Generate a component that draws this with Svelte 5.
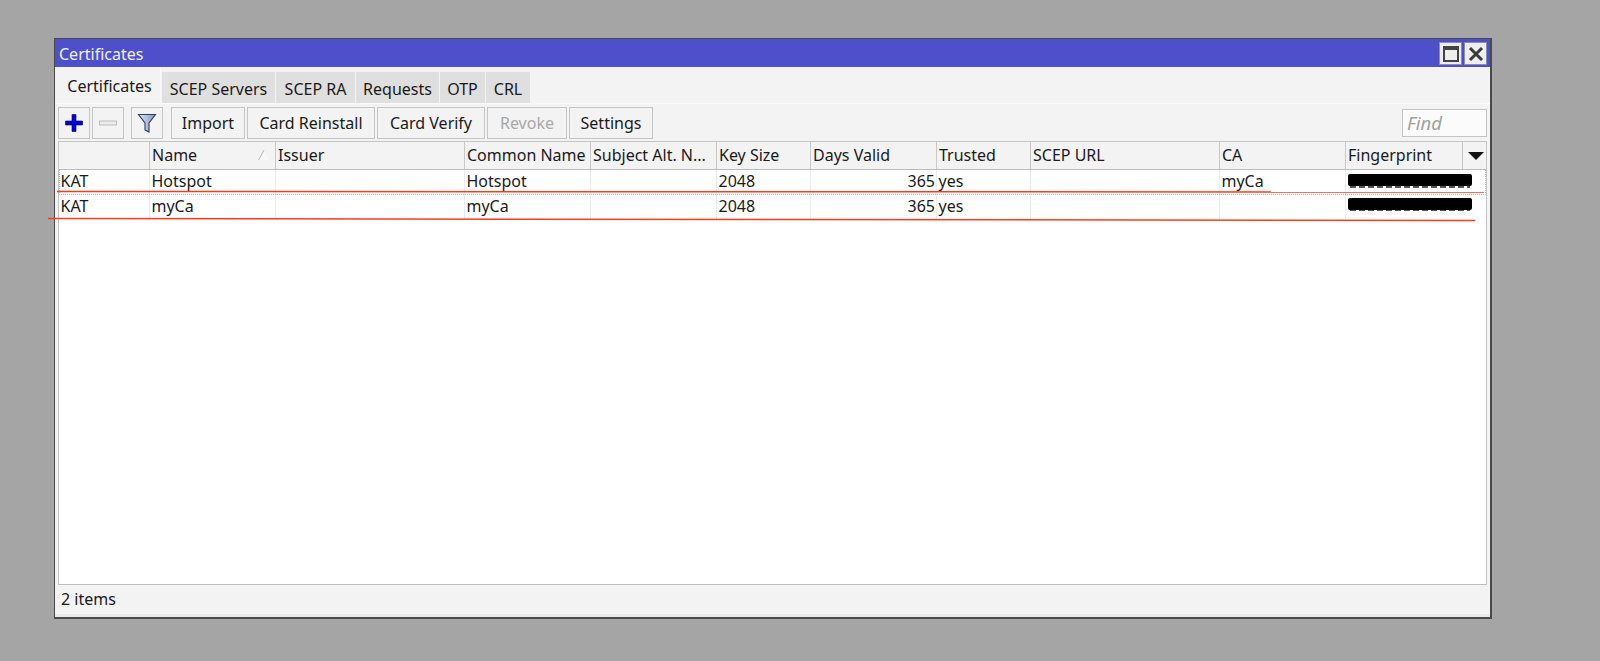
<script lang="ts">
  const tabs = [
    { label: "Certificates", w: 102, active: true },
    { label: "SCEP Servers", w: 113 },
    { label: "SCEP RA", w: 79 },
    { label: "Requests", w: 83 },
    { label: "OTP", w: 45 },
    { label: "CRL", w: 44 },
  ];
  const actions = [
    { label: "Import", w: 74 },
    { label: "Card Reinstall", w: 128 },
    { label: "Card Verify", w: 108 },
    { label: "Revoke", w: 80, off: true },
    { label: "Settings", w: 84 },
  ];
  const cols = [
    { label: "", w: 91 },
    { label: "Name", w: 126, sorted: true },
    { label: "Issuer", w: 189 },
    { label: "Common Name", w: 126 },
    { label: "Subject Alt. N...", w: 126 },
    { label: "Key Size", w: 94 },
    { label: "Days Valid", w: 126, right: true },
    { label: "Trusted", w: 94 },
    { label: "SCEP URL", w: 189 },
    { label: "CA", w: 126 },
    { label: "Fingerprint", w: 117 },
  ];
  const rows = [
    ["KAT", "Hotspot", "", "Hotspot", "", "2048", "365", "yes", "", "myCa", "#"],
    ["KAT", "myCa", "", "myCa", "", "2048", "365", "yes", "", "", "#"],
  ];
  const base = cols.slice(0, -1).map((c) => c.w + "px").join(" ");
  const headCols = base + " 117px 24px";
  // data cells of the last column run wider than its header
  const rowCols = base + " 126px 15px";
</script>

<div class="window">
  <div class="title">
    <span>Certificates</span>
    <div class="winbtns">
      <button class="winbtn" aria-label="Maximize">
        <svg viewBox="0 0 22 22" width="22" height="22"><rect x="4" y="4" width="14" height="14" fill="none" stroke="#444" stroke-width="2" /><rect x="4" y="4" width="14" height="3" fill="#444" /></svg>
      </button>
      <button class="winbtn" aria-label="Close">
        <svg viewBox="0 0 22 22" width="22" height="22"><path d="M5 5 L17 17 M17 5 L5 17" stroke="#3a3a3a" stroke-width="3" /></svg>
      </button>
    </div>
  </div>

  <div class="tabs">
    {#each tabs as t}
      <div class="tab" class:active={t.active} style="width:{t.w}px">{t.label}</div>
    {/each}
  </div>

  <div class="toolbar">
    <button class="tool" aria-label="Add">
      <svg viewBox="0 0 20 20" width="20" height="20"><path d="M8 1.500h4v6.500h6.500v4H12v6.500H8V12H1.500V8H8z" fill="#0000d8" stroke="#000060" stroke-width="0.6" /></svg>
    </button>
    <button class="tool" aria-label="Remove">
      <svg viewBox="0 0 20 20" width="20" height="20"><rect x="1.500" y="8" width="17" height="4" fill="#ececec" stroke="#bdbdbd" /></svg>
    </button>
    <button class="tool filter" aria-label="Filter">
      <svg viewBox="0 0 20 22" width="20" height="22">
        <defs>
          <linearGradient id="fun" x1="0" x2="1" y1="0" y2="0">
            <stop offset="0" stop-color="#e4e9f4" />
            <stop offset="1" stop-color="#7f93c4" />
          </linearGradient>
        </defs>
        <path d="M1.500 2.500h17L12 11v9l-4-2v-7z" fill="url(#fun)" stroke="#2f3b60" stroke-width="1.100" />
      </svg>
    </button>
    <div class="actions">
      {#each actions as a}
        <button class="act" class:off={a.off} style="width:{a.w}px">{a.label}</button>
      {/each}
    </div>
    <div class="find">Find</div>
  </div>

  <div class="table">
    <div class="head" style="grid-template-columns:{headCols}">
      {#each cols as c}
        <div class="th">
          {c.label}
          {#if c.sorted}
            <svg class="sort" viewBox="0 0 12 12" width="12" height="12"><path d="M6 1 L11.500 11 H0.500 Z" fill="#f8f8f8" /><path d="M6 1 L0.500 11" fill="none" stroke="#b4b4b4" /></svg>
          {/if}
        </div>
      {/each}
      <div class="th more"><span class="caret"></span></div>
    </div>
    <div class="body">
      {#each rows as r, ri}
        <div class="row" class:first={ri === 0} style="grid-template-columns:{rowCols}">
          {#each r as v, i}
            <div class="td" class:num={cols[i].right}>
              {#if v === "#"}<span class="blot" class:low={ri === 1}></span>{:else}{v}{/if}
            </div>
          {/each}
        </div>
      {/each}
    </div>
  </div>

  <div class="status">2 items</div>
</div>

<svg class="ink" width="1600" height="661" aria-hidden="true">
  <line x1="57" y1="191.500" x2="1484" y2="192" stroke="#ff3b1c" stroke-width="1.500" />
  <line x1="48" y1="218.500" x2="1475" y2="220.500" stroke="#ff3b1c" stroke-width="1.500" />
</svg>

<style>
  :global(body) {
    margin: 0;
    background: #a5a5a5;
  }

  .window {
    box-sizing: border-box;
    width: 1438px;
    height: 581px;
    margin: 38px 0 0 54px;
    display: flex;
    flex-direction: column;
    background: #f3f3f3;
    border: 1px solid #4a4a4a;
    border-width: 1px 2px 2px 1px;
    font-family: "Noto Sans", "Open Sans", sans-serif;
    font-size: 16px;
    color: #1a1a1a;
  }

  button {
    font: inherit;
    color: inherit;
    padding: 0;
  }

  .title {
    height: 28px;
    flex: none;
    display: flex;
    align-items: center;
    justify-content: space-between;
    padding: 0 3px 0 4px;
    background: #4e4fcb;
    color: #eef0ff;
  }

  .title span {
    padding-top: 2px;
  }

  .winbtns {
    display: flex;
    gap: 2px;
  }

  .winbtn {
    width: 23px;
    height: 23px;
    display: grid;
    place-items: center;
    background: #eeeeee;
    border: 1px solid #8d8db0;
  }

  .tabs {
    height: 37px;
    flex: none;
    display: flex;
    align-items: flex-end;
    gap: 1px;
    padding-left: 4px;
    border-bottom: 1px solid #fafafa;
    box-sizing: border-box;
  }

  .tab {
    height: 31px;
    box-sizing: border-box;
    padding-top: 2px;
    display: flex;
    align-items: center;
    justify-content: center;
    background: #dfdfdf;
    white-space: nowrap;
  }

  .tab.active {
    height: 36px;
    background: #f3f3f3;
    border: solid #fafafa;
    border-width: 1px 1px 0 0;
    padding-top: 0;
  }

  .toolbar {
    height: 35px;
    flex: none;
    box-sizing: border-box;
    display: flex;
    align-items: flex-end;
    padding: 0 3px;
  }

  .tool {
    box-sizing: border-box;
    width: 32px;
    height: 32px;
    margin-right: 2px;
    display: grid;
    place-items: center;
    background: #f3f3f3;
    border: 1px solid #c4c4c4;
  }

  .tool.filter {
    margin-left: 5px;
  }

  .actions {
    display: flex;
    gap: 2px;
    margin-left: 6px;
  }

  .act {
    box-sizing: border-box;
    height: 32px;
    background: #f3f3f3;
    border: 1px solid #c4c4c4;
    white-space: nowrap;
  }

  .act.off {
    color: #a8a8a8;
  }

  .find {
    box-sizing: border-box;
    width: 85px;
    height: 28px;
    margin: 0 0 2px auto;
    padding: 0 4px;
    line-height: 25px;
    background: #fbfbfb;
    border: 1px solid #c4c4c4;
    font-size: 18.500px;
    font-style: italic;
    color: #a0a0a0;
  }

  .table {
    flex: 1;
    margin: 2px 3px 0 3px;
    display: flex;
    flex-direction: column;
    background: #fff;
    border: 1px solid #c4c4c4;
    border-bottom-color: #bdbdbd;
    min-height: 0;
  }

  .head {
    display: grid;
    height: 28px;
    flex: none;
    box-sizing: border-box;
    background: #f3f3f3;
    border-bottom: 1px solid #bcbcbc;
  }

  .th {
    position: relative;
    padding-left: 2px;
    line-height: 27.500px;
    border-right: 1px solid #c8c8c8;
    white-space: nowrap;
    overflow: hidden;
  }

  .th.more {
    border-right: 0;
    display: grid;
    place-items: center;
  }

  .caret {
    width: 0;
    height: 0;
    border: solid transparent;
    border-width: 8px 8px 0 8px;
    border-top-color: #111;
  }

  .sort {
    position: absolute;
    right: 5px;
    top: 7px;
  }

  .row {
    display: grid;
    height: 24.500px;
    box-sizing: border-box;
  }

  .row.first {
    position: relative;
  }

  /* focus frame of the selected row, open at the top */
  .row.first::after {
    content: "";
    position: absolute;
    inset: 0;
    border: 1px dotted #b8b8b8;
    border-top: 0;
    pointer-events: none;
  }

  .td {
    padding-left: 1.500px;
    line-height: 23px;
    border-right: 1px solid #ececec;
    white-space: nowrap;
    overflow: hidden;
  }

  .td:last-child {
    border-right: 0;
  }

  .td.num {
    padding: 0 1px 0 0;
    text-align: right;
  }

  .blot {
    position: relative;
    display: block;
    width: 124px;
    height: 12px;
    margin-top: 4px;
    background: #000;
    border-radius: 2px;
  }

  .blot.low {
    margin-top: 3px;
  }

  /* digit bottoms that stick out under the scribble */
  .blot::after {
    content: "";
    position: absolute;
    left: 2px;
    right: 2px;
    top: 12px;
    height: 1.500px;
    background: repeating-linear-gradient(90deg, #555 0 6px, transparent 6px 9px);
  }

  .status {
    height: 32px;
    flex: none;
    box-sizing: border-box;
    padding: 0 6px;
    line-height: 28px;
    border-bottom: 3px solid #e9e9e9;
  }

  .ink {
    position: absolute;
    left: 0;
    top: 0;
    pointer-events: none;
  }
</style>
